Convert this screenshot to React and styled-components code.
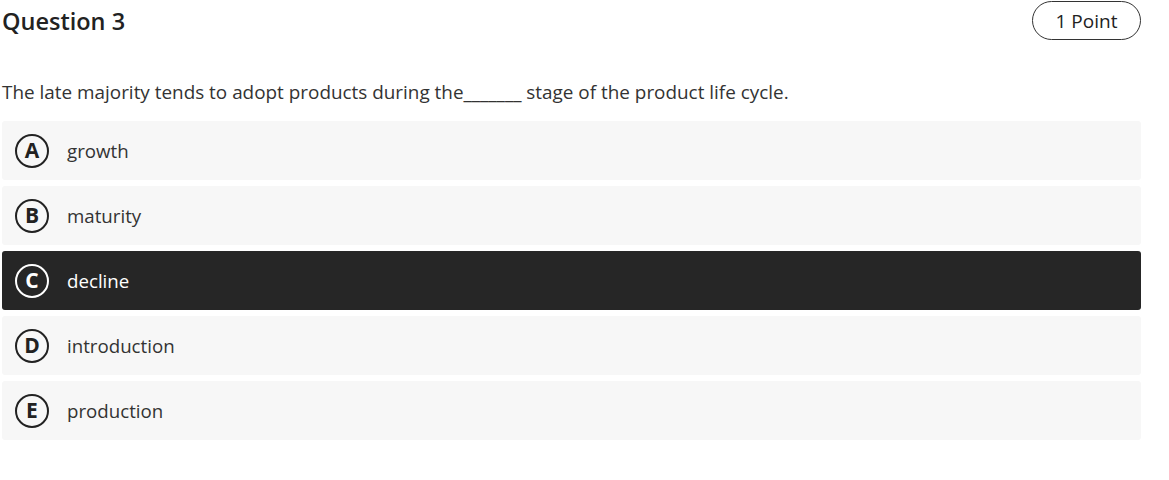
import React from "react";
import styled, { createGlobalStyle } from "styled-components";

const GlobalStyle = createGlobalStyle`
    body {
        margin: 0;
        background: #ffffff;
        font-family: "Open Sans", "Noto Sans", sans-serif;
        color: #333333;
    }
`;

const Container = styled.div`
    padding: 1px 28px 0 2px;
`;

const Header = styled.div`
    display: flex;
    justify-content: space-between;
    align-items: center;
    height: 39px;
`;

const Title = styled.h2`
    margin: 0;
    font-size: 23.5px;
    font-weight: 600;
    color: #222222;
`;

const Badge = styled.div`
    width: 107px;
    height: 37px;
    border: 1px solid #333333;
    border-radius: 20px;
    display: flex;
    align-items: center;
    justify-content: center;
    font-size: 19px;
    font-weight: 500;
    color: #222222;
`;

const Prompt = styled.p`
    margin: 40px 0 0 0;
    font-size: 18.9px;
    line-height: 25px;
    color: #333333;
`;

const Options = styled.div`
    display: flex;
    flex-direction: column;
    gap: 6px;
    margin-top: 16px;
`;

const Option = styled.div`
    display: flex;
    align-items: center;
    height: 59px;
    padding-left: 13px;
    border-radius: 3px;
    background: ${props => (props.selected ? "#262626" : "#f7f7f7")};
    color: ${props => (props.selected ? "#ffffff" : "#333333")};
    cursor: pointer;
`;

const Letter = styled.span`
    width: 30px;
    height: 30px;
    border-radius: 50%;
    border: 2px solid ${props => (props.selected ? "#ffffff" : "#222222")};
    display: flex;
    align-items: center;
    justify-content: center;
    font-size: 21px;
    font-weight: 700;
    line-height: 1;
    color: ${props => (props.selected ? "#ffffff" : "#222222")};
    flex-shrink: 0;
`;

const Label = styled.span`
    margin-left: 18px;
    font-size: 18.7px;
`;

const answers = [
    { key: "A", text: "growth" },
    { key: "B", text: "maturity" },
    { key: "C", text: "decline" },
    { key: "D", text: "introduction" },
    { key: "E", text: "production" },
];

const App = () => {
    const selected = "C";
    return (
        <>
            <GlobalStyle />
            <Container>
                <Header>
                    <Title>Question 3</Title>
                    <Badge>1 Point</Badge>
                </Header>
                <Prompt>
                    The late majority tends to adopt products during the_______ stage of the product life cycle.
                </Prompt>
                <Options>
                    {answers.map(a => (
                        <Option key={a.key} selected={a.key === selected}>
                            <Letter selected={a.key === selected}>{a.key}</Letter>
                            <Label>{a.text}</Label>
                        </Option>
                    ))}
                </Options>
            </Container>
        </>
    );
};

export default App;
